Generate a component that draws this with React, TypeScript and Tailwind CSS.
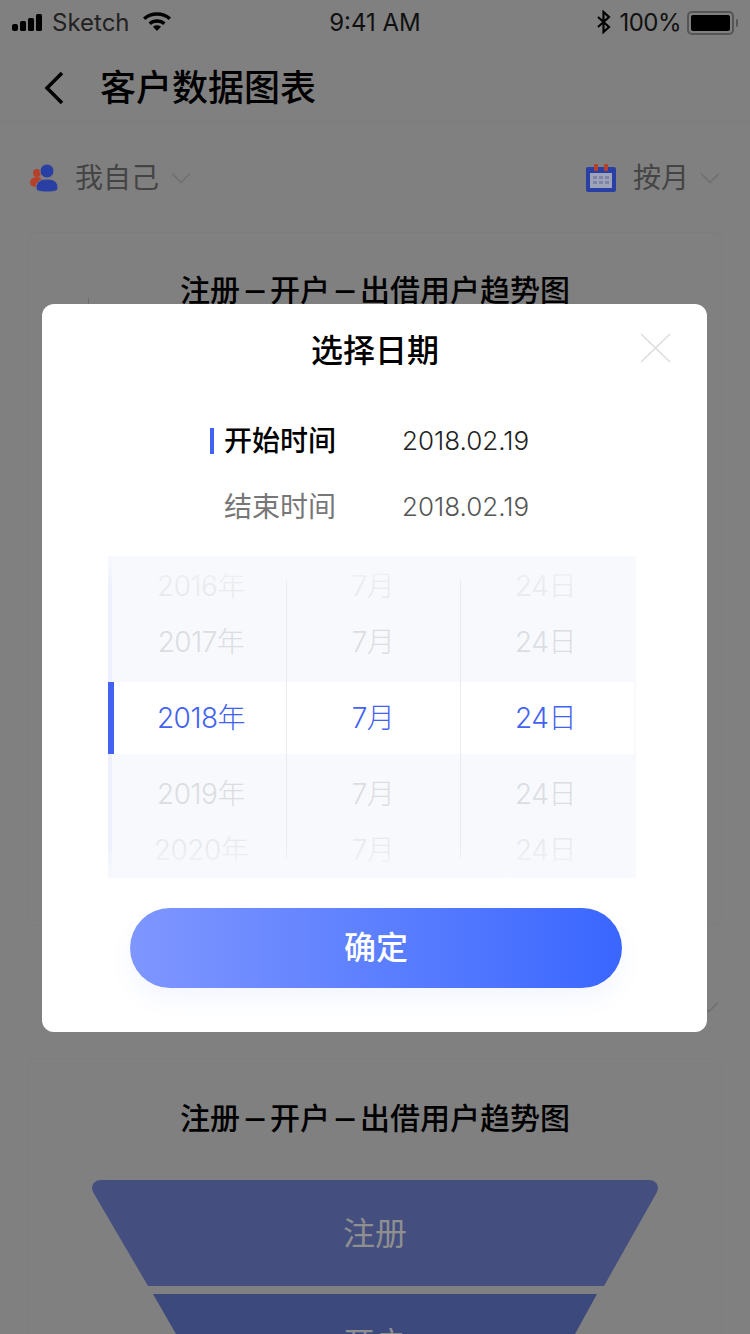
const cjk = "font-['Inter','Noto_Sans_CJK_SC',sans-serif]";

function StatusBar() {
  return (
    <div className="flex h-[44px] items-center justify-between px-[12px] pt-[2px] text-[24px] leading-none text-[#0a0a0a]">
      <div className="flex w-[300px] items-center">
        <svg width="36" height="20" viewBox="0 0 36 20" fill="#000" className="mr-[4px]">
          <rect x="0" y="11" width="6" height="7" rx="2" />
          <rect x="8" y="8" width="6" height="10" rx="1.5" />
          <rect x="16" y="5" width="6" height="13" rx="1.5" />
          <rect x="24" y="1" width="6" height="17" rx="1.5" />
        </svg>
        <span className="text-[#222]">Sketch</span>
        <svg width="30" height="22" viewBox="0 0 30 22" fill="#000" className="ml-[12px] mb-[4px]">
          <path d="M1 7.5C8.5.5 21.500.5 29 7.500l-2.300 2.400C20.500 4.500 9.500 4.500 3.300 9.900z" />
          <path d="M6.500 12.500c4.800-4.300 12.200-4.300 17 0l-2.400 2.400c-3.400-2.900-8.800-2.900-12.200 0z" />
          <path d="M11 16.800c2.300-2 5.700-2 8 0L15 21z" />
        </svg>
      </div>
      <span className="text-[#111]">9:41 AM</span>
      <div className="flex w-[300px] items-center justify-end">
        <svg width="16" height="24" viewBox="0 0 16 24" fill="none" stroke="#000" strokeWidth="2.200" className="mr-[7px] mb-[2px]">
          <path d="M2 7l11 10-5.500 5V2L13 7 2 17" />
        </svg>
        <span className="mr-[6px] tracking-[-0.5px] text-[#111]">100%</span>
        <div className="flex h-[24px] w-[47px] items-center rounded-[5px] border-2 border-[#555] p-[2px]">
          <div className="h-full w-full rounded-[2px] bg-black" />
        </div>
        <div className="ml-[2px] h-[8px] w-[2px] rounded-r-[2px] bg-[#555]" />
      </div>
    </div>
  );
}

function Chevron({ className }: { className?: string }) {
  return (
    <svg width="20" height="12" viewBox="0 0 20 12" fill="none" stroke="#6e6e6e" strokeWidth="1.500" className={className}>
      <path d="M1 1.500l9 9 9-9" />
    </svg>
  );
}

function ChartTitle() {
  return (
    <span className="text-[30px] font-medium leading-none text-black">
      注册<span className="inline-block w-[30px] scale-x-125 text-center">–</span>开户<span className="inline-block w-[30px] scale-x-125 text-center">–</span>出借用户趋势图
    </span>
  );
}

function Funnel() {
  return (
    <svg width="566" height="154" viewBox="0 0 566 154" className="mt-[47px] block">
      <path d="M9 0H557C563 0 568 5 565 12L512 106H56L1 12C-2 5 3 0 9 0Z" fill="#444f80" />
      <path d="M61 114H505L483 154H84Z" fill="#3c497d" />
      <text x="283" y="65" textAnchor="middle" fontSize="32" fill="#8f8f8f" fontFamily="Noto Sans CJK SC">注册</text>
      <text x="283" y="175" textAnchor="middle" fontSize="32" fill="#8f8f8f" fontFamily="Noto Sans CJK SC">开户</text>
    </svg>
  );
}

const years = ["2016年", "2017年", "2018年", "2019年", "2020年"];
const months = ["7月", "7月", "7月", "7月", "7月"];
const days = ["24日", "24日", "24日", "24日", "24日"];
const rowStyles = [
  "h-[58px] pt-[2px] text-[#e9eaee]",
  "h-[68px] pb-[12px] text-[#dcdde2]",
  "h-[72px] bg-white text-[#4262f2]",
  "h-[68px] pt-[12px] text-[#dcdde2]",
  "h-[56px] text-[#e9eaee]",
];

function PickerColumn({ items, className, textClass }: { items: string[]; className: string; textClass?: string }) {
  return (
    <div className={`flex flex-col ${className}`}>
      {items.map((t, i) => (
        <div key={i} className={`flex items-center justify-center ${rowStyles[i]}`}>
          <span className={textClass}>{t}</span>
        </div>
      ))}
    </div>
  );
}

function Picker() {
  return (
    <div className="relative mx-[66px] mt-[17px] flex h-[322px] w-[528px] overflow-hidden bg-[#f8f9fd] text-[28px] font-light leading-none tracking-[-0.5px]">
      <PickerColumn items={years} className="w-[178px]" textClass="ml-[8px]" />
      <PickerColumn items={months} className="w-[174px]" />
      <PickerColumn items={days} className="w-[174px]" textClass="mr-[3px]" />
      <div className="absolute bottom-0 left-0 top-0 w-[4px] bg-[#eef1fd]" />
      <div className="absolute left-0 top-[126px] h-[72px] w-[6px] bg-[#4262f2]" />
      <div className="absolute bottom-[20px] left-[178px] top-[24px] w-px bg-[#e9ebf1]" />
      <div className="absolute bottom-[20px] left-[352px] top-[24px] w-px bg-[#e9ebf1]" />
      <div className="absolute left-0 right-0 top-0 h-[30px] bg-gradient-to-b from-[#f8f9fd] to-transparent" />
      <div className="absolute bottom-0 left-0 right-0 h-[30px] bg-gradient-to-t from-[#f8f9fd] to-transparent" />
    </div>
  );
}

function Modal() {
  return (
    <div className={`absolute left-[42px] top-[304px] flex h-[728px] w-[665px] flex-col rounded-[12px] bg-white ${cjk}`}>
      <div className="relative flex h-[103px] items-center justify-center pb-[9px] pl-[1px] text-[32px] font-medium leading-none text-black">
        选择日期
        <svg width="32" height="32" viewBox="0 0 32 32" fill="none" stroke="#dcdcdc" strokeWidth="1.500" className="absolute left-[598px] top-[28px]">
          <path d="M1 2l29 28M30 2L1 30" />
        </svg>
      </div>
      <div className="flex h-[66px] items-center pl-[168px] pt-[2px]">
        <div className="h-[26px] w-[4px] bg-[#4262f2]" />
        <span className="ml-[10px] w-[178px] text-[28px] font-medium leading-none text-black">开始时间</span>
        <span className="text-[26px] font-light leading-none text-[#222]">2018.02.19</span>
      </div>
      <div className="flex h-[66px] items-center pl-[182px] pt-[2px]">
        <span className="w-[178px] text-[28px] leading-none text-[#777]">结束时间</span>
        <span className="text-[26px] font-light leading-none text-[#555]">2018.02.19</span>
      </div>
      <Picker />
      <button className="mx-[88px] mt-[30px] flex h-[80px] w-[492px] items-center justify-center rounded-[40px] bg-gradient-to-r from-[#7f96ff] to-[#3a66ff] text-[32px] font-medium leading-none text-white shadow-[0_12px_24px_rgba(70,100,255,0.06)]">
        确定
      </button>
    </div>
  );
}

export default function App() {
  return (
    <div className={`relative h-[1334px] w-[750px] overflow-hidden bg-[#808080] ${cjk}`}>
      <StatusBar />
      <div className="flex h-[78px] items-center border-b border-[#7c7c7c] pl-[44px] pt-[10px]">
        <svg width="20" height="34" viewBox="0 0 20 34" fill="none" stroke="#000" strokeWidth="3.500">
          <path d="M18 2L3 17l15 15" />
        </svg>
        <span className="ml-[36px] text-[36px] font-medium leading-none text-black">客户数据图表</span>
      </div>
      <div className="flex h-[110px] items-center justify-between px-[30px] pt-[2px] text-[28px] leading-none text-[#444]">
        <div className="flex items-center">
          <svg width="29" height="30" viewBox="0 0 29 30">
            <circle cx="7" cy="10" r="4" fill="#b5412b" />
            <path d="M0 20c0-4 3-6 7-6s6 3 6 6-3 4-6 4-7-1-7-4z" fill="#b5412b" />
            <circle cx="17" cy="8" r="7" fill="#2a3fa4" stroke="#808080" strokeWidth="1" />
            <path d="M6 25c0-6 4-9 11-9s11 3 11 9c0 3-4 4-11 4S6 28 6 25z" fill="#2a3fa4" stroke="#808080" strokeWidth="1" />
          </svg>
          <span className="ml-[16px]">我自己</span>
          <Chevron className="ml-[12px]" />
        </div>
        <div className="flex items-center">
          <svg width="30" height="28" viewBox="0 0 30 28">
            <rect x="0" y="3" width="30" height="25" rx="2" fill="#2a3fa4" />
            <rect x="4" y="9" width="22" height="15" fill="#9ea3ba" />
            <rect x="8" y="0" width="4" height="7" rx="1" fill="#b5412b" />
            <rect x="18" y="0" width="4" height="7" rx="1" fill="#b5412b" />
            <path d="M7 12h4v3H7zM13 12h4v3h-4zM19 12h4v3h-4zM7 17h4v3H7zM13 17h4v3h-4zM19 17h4v3h-4z" fill="#7d84a8" />
          </svg>
          <span className="ml-[17px]">按月</span>
          <Chevron className="ml-[11px]" />
        </div>
      </div>
      <div className="mx-[28px] h-[694px] rounded-[8px] border border-[#7d7d7d] pt-[42px] text-center">
        <ChartTitle />
      </div>
      <div className="mx-[28px] mt-[132px] flex h-[300px] w-[694px] flex-col items-center rounded-[8px] border border-b-0 border-[#7d7d7d] pt-[44px]">
        <ChartTitle />
        <Funnel />
      </div>
      <div className="absolute left-[88px] top-[298px] h-[6px] w-px bg-[#6e6e6e]" />
      <Chevron className="absolute left-[699px] top-[1001px]" />
      <Modal />
    </div>
  );
}
